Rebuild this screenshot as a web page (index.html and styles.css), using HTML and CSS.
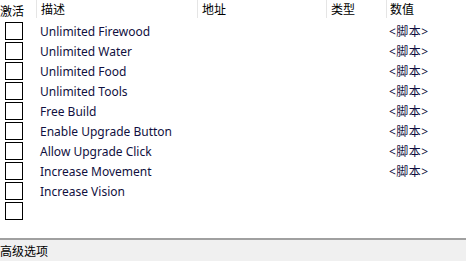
FILE: index.html
```html
<!DOCTYPE html>
<html>
<head>
<meta charset="utf-8">
<link rel="stylesheet" href="styles.css">
</head>
<body>
<div class="app">
  <div class="list">
    <div class="head">
      <div class="c c-act">激活</div>
      <div class="c c-desc">描述</div>
      <div class="c c-addr">地址</div>
      <div class="c c-type">类型</div>
      <div class="c c-val">数值</div>
    </div>
    <div class="row"><div class="c c-act"><span class="box"></span></div><div class="c c-desc">Unlimited Firewood</div><div class="c c-addr"></div><div class="c c-type"></div><div class="c c-val">&lt;脚本&gt;</div></div>
    <div class="row"><div class="c c-act"><span class="box"></span></div><div class="c c-desc">Unlimited Water</div><div class="c c-addr"></div><div class="c c-type"></div><div class="c c-val">&lt;脚本&gt;</div></div>
    <div class="row"><div class="c c-act"><span class="box"></span></div><div class="c c-desc">Unlimited Food</div><div class="c c-addr"></div><div class="c c-type"></div><div class="c c-val">&lt;脚本&gt;</div></div>
    <div class="row"><div class="c c-act"><span class="box"></span></div><div class="c c-desc">Unlimited Tools</div><div class="c c-addr"></div><div class="c c-type"></div><div class="c c-val">&lt;脚本&gt;</div></div>
    <div class="row"><div class="c c-act"><span class="box"></span></div><div class="c c-desc">Free Build</div><div class="c c-addr"></div><div class="c c-type"></div><div class="c c-val">&lt;脚本&gt;</div></div>
    <div class="row"><div class="c c-act"><span class="box"></span></div><div class="c c-desc">Enable Upgrade Button</div><div class="c c-addr"></div><div class="c c-type"></div><div class="c c-val">&lt;脚本&gt;</div></div>
    <div class="row"><div class="c c-act"><span class="box"></span></div><div class="c c-desc">Allow Upgrade Click</div><div class="c c-addr"></div><div class="c c-type"></div><div class="c c-val">&lt;脚本&gt;</div></div>
    <div class="row"><div class="c c-act"><span class="box"></span></div><div class="c c-desc">Increase Movement</div><div class="c c-addr"></div><div class="c c-type"></div><div class="c c-val">&lt;脚本&gt;</div></div>
    <div class="row"><div class="c c-act"><span class="box"></span></div><div class="c c-desc">Increase Vision</div><div class="c c-addr"></div><div class="c c-type"></div><div class="c c-val"></div></div>
    <div class="row"><div class="c c-act"><span class="box"></span></div><div class="c c-desc"></div><div class="c c-addr"></div><div class="c c-type"></div><div class="c c-val"></div></div>
  </div>
  <div class="footer">高级选项</div>
</div>
</body>
</html>
```
FILE: styles.css
```css
html, body {
  margin: 0;
  padding: 0;
  background: #ffffff;
}
body {
  font-family: "Noto Sans", "Noto Sans CJK SC", sans-serif;
  font-size: 12px;
  color: #000;
}
.app {
  width: 466px;
  height: 261px;
  display: flex;
  flex-direction: column;
  overflow: hidden;
}
.list {
  flex: 1;
  background: #fff;
  border-bottom: 2px solid #a0a0a0;
}
.head, .row {
  display: flex;
}
.head {
  height: 21px;
  align-items: stretch;
}
.head .c {
  display: flex;
  align-items: center;
  height: 21px;
  color: #000;
}
.head .c-desc, .head .c-addr, .head .c-type, .head .c-val {
  border-left: 1px solid #e5e5e5;
  height: 18px;
  margin-bottom: 3px;
}
.row {
  height: 20px;
  align-items: center;
  color: #101040;
}
.c-act { width: 36px; box-sizing: border-box; }
.c-desc { width: 161px; padding-left: 4px; box-sizing: border-box; }
.c-addr { width: 129px; padding-left: 4px; box-sizing: border-box; }
.c-type { width: 60px; padding-left: 4px; box-sizing: border-box; }
.c-val { width: 80px; padding-left: 3px; box-sizing: border-box; }
.row .c-desc { padding-left: 4px; }
.row .c-val { font-size: 12px; letter-spacing: 0.5px; }
.box {
  display: block;
  width: 16px;
  height: 16px;
  border: 1px solid #000;
  margin-left: 5px;
  background: #fff;
}
.footer {
  height: 21px;
  background: #f0f0f0;
  display: flex;
  align-items: center;
  color: #000;
}
```
